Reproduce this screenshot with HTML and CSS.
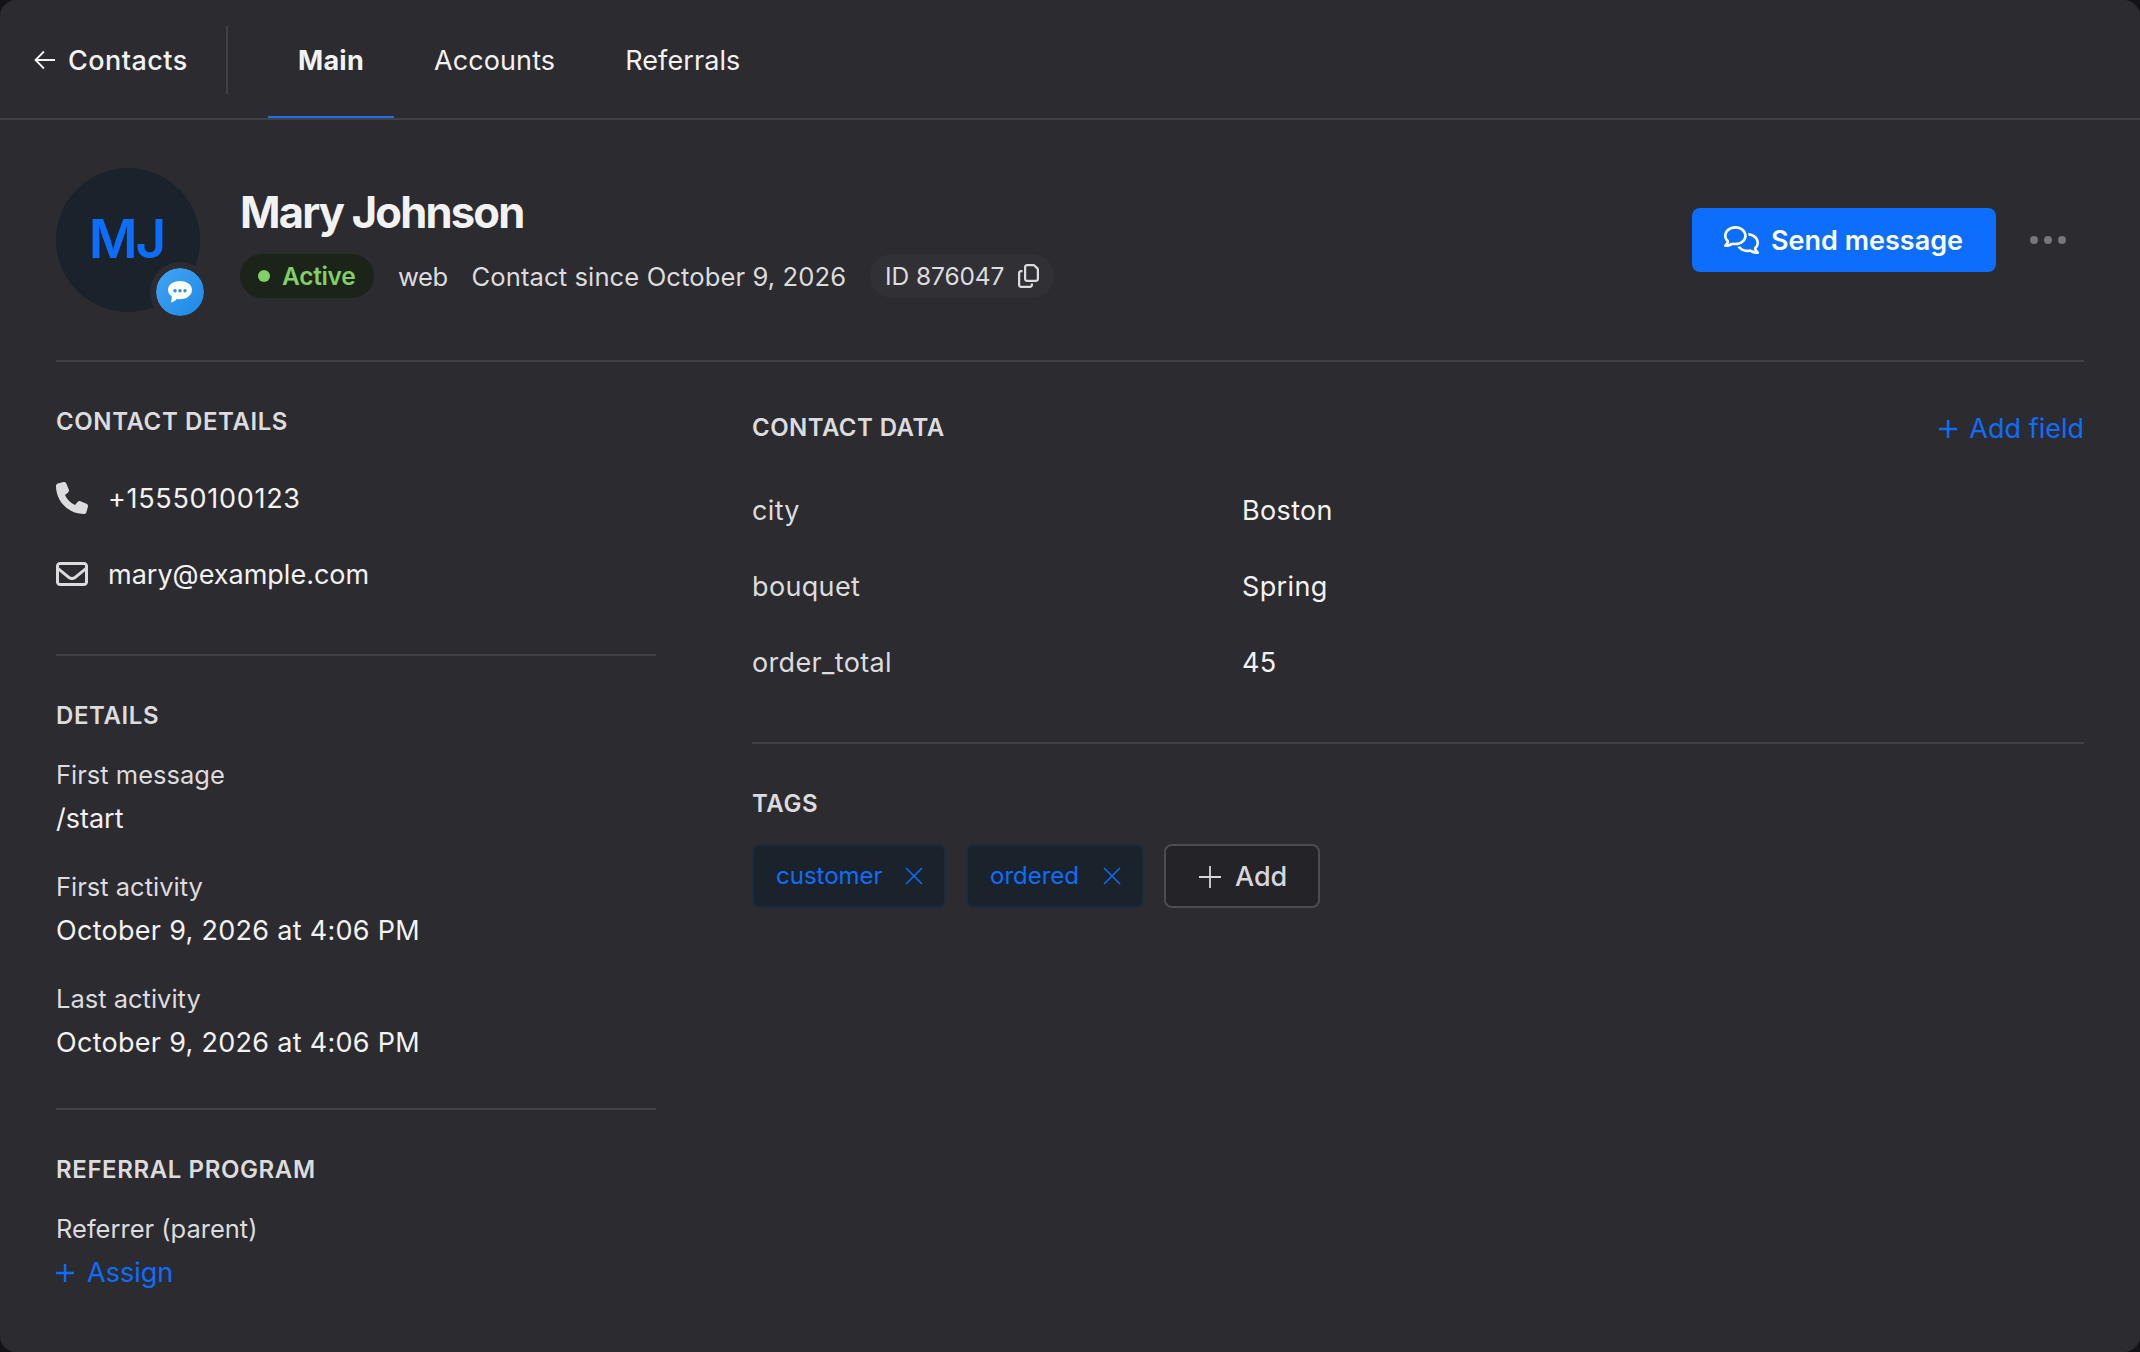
FILE: index.html
```html
<!DOCTYPE html>
<html lang="en">
<head>
  <meta charset="UTF-8">
  <title>Mary Johnson</title>
  <link rel="stylesheet" href="styles.css">
</head>
<body>
  <div class="window">
    <header class="topbar">
      <a class="back">
        <svg class="back-icon" viewBox="0 0 22 20"><path d="M21 10H1.5M10 1.5L1.5 10L10 18.5"/></svg>
        <span>Contacts</span>
      </a>
      <nav class="tabs">
        <a class="tab active">Main</a>
        <a class="tab">Accounts</a>
        <a class="tab">Referrals</a>
      </nav>
    </header>

    <main class="page">
      <section class="profile">
        <div class="avatar">
          <span>MJ</span>
          <div class="channel">
            <svg viewBox="0 0 24 22"><path fill="#fff" d="M12 0C5.2 0 0 3.8 0 8.8c0 2.6 1.4 4.9 3.7 6.5c.1 2-.3 4.3-.9 6.2c2.700-.5 4.600-1.700 5.900-3.500c1.100.2 2.200.3 3.300.3c6.800 0 12-4.200 12-9.500S18.800 0 12 0z"/><g fill="#2f8fe8"><circle cx="7" cy="9.8" r="1.7"/><circle cx="12" cy="9.8" r="1.7"/><circle cx="17" cy="9.8" r="1.7"/></g></svg>
          </div>
        </div>
        <div class="info">
          <h1>Mary Johnson</h1>
          <div class="meta">
            <span class="status">Active</span>
            <span class="source">web</span>
            <span class="since">Contact since October 9, 2026</span>
            <span class="contact-id">
              <span>ID 876047</span>
              <svg viewBox="0 0 448 512"><path d="M384 336H192c-8.8 0-16-7.2-16-16V64c0-8.8 7.2-16 16-16l140.1 0L400 115.9V320c0 8.8-7.2 16-16 16zM192 384H384c35.3 0 64-28.7 64-64V115.9c0-12.7-5.1-24.9-14.1-33.9L366.1 14.1c-9-9-21.2-14.1-33.9-14.1H192c-35.3 0-64 28.7-64 64V320c0 35.3 28.7 64 64 64zM64 128c-35.3 0-64 28.7-64 64V448c0 35.3 28.7 64 64 64H256c35.3 0 64-28.7 64-64V416H272v32c0 8.8-7.2 16-16 16H64c-8.8 0-16-7.2-16-16V192c0-8.8 7.2-16 16-16H96V128H64z"/></svg>
            </span>
          </div>
        </div>
        <button class="send">
          <svg viewBox="0 0 640 512"><path d="M88.2 309.1c9.8-18.3 6.8-40.8-7.5-55.8C59.4 230.9 48 204 48 176c0-63.5 63.8-128 160-128s160 64.5 160 128s-63.8 128-160 128c-13.1 0-25.8-1.3-37.8-3.6c-10.4-2-21.2-.6-30.7 4.2c-4.1 2.1-8.3 4.1-12.6 6c-16 7.2-32.9 13.5-49.9 18c2.8-4.6 5.4-9.1 7.9-13.6c1.1-1.9 2.2-3.9 3.2-5.9zM208 352c114.9 0 208-78.8 208-176S322.9 0 208 0S0 78.8 0 176c0 41.8 17.2 80.1 45.9 110.3c-.9 1.7-1.9 3.5-2.8 5.1c-10.3 18.4-22.3 36.5-36.6 52.1c-6.6 7-8.3 17.2-4.6 25.9C5.8 378.3 14.4 384 24 384c43 0 86.5-13.3 122.7-29.7c4.8-2.2 9.6-4.5 14.2-6.8c15.1 3 30.9 4.5 47.1 4.5zM432 480c16.2 0 31.9-1.6 47.1-4.5c4.6 2.3 9.4 4.6 14.2 6.8C529.5 498.7 573 512 616 512c9.6 0 18.2-5.7 22-14.5c3.8-8.8 2-19-4.6-25.9c-14.2-15.6-26.2-33.7-36.6-52.1c-.9-1.7-1.9-3.4-2.8-5.1C622.8 384.1 640 345.8 640 304c0-94.4-87.9-171.5-198.2-175.8c4.1 15.2 6.2 31.2 6.2 47.8l0 .6c87.2 6.7 144 67.5 144 127.4c0 28-11.4 54.9-32.7 77.2c-14.3 15-17.3 37.6-7.5 55.8c1.1 2 2.2 4 3.2 5.9c2.5 4.5 5.2 9 7.9 13.6c-17-4.5-33.9-10.7-49.9-18c-4.3-1.9-8.5-3.9-12.6-6c-9.5-4.8-20.3-6.2-30.7-4.2c-12.1 2.4-24.8 3.6-37.8 3.6c-61.7 0-110-26.5-136.8-62.3c-16 5.4-32.8 9.4-50 11.8C279 439.8 350 480 432 480z"/></svg>
          <span>Send message</span>
        </button>
        <button class="more"><i></i><i></i><i></i></button>
      </section>

      <div class="columns">
        <aside>
          <section class="block reach">
            <h2>Contact details</h2>
            <div class="reach-row">
              <svg viewBox="0 0 512 512"><path d="M164.9 24.6c-7.7-18.6-28-28.5-47.4-23.2l-88 24C12.1 30.2 0 46 0 64C0 311.4 200.6 512 448 512c18 0 33.8-12.1 38.6-29.5l24-88c5.3-19.4-4.6-39.7-23.2-47.4l-96-40c-16.3-6.8-35.2-2.1-46.3 11.6L304.7 368C234.3 334.7 177.3 277.7 144 207.3L193.3 167c13.7-11.2 18.4-30 11.6-46.3l-40-96z"/></svg>
              <span class="phone">+15550100123</span>
            </div>
            <div class="reach-row">
              <svg viewBox="0 0 512 512"><path d="M64 112c-8.8 0-16 7.2-16 16v22.1L220.5 291.7c20.7 17 50.4 17 71.1 0L464 150.1V128c0-8.8-7.2-16-16-16H64zM48 212.2V384c0 8.8 7.2 16 16 16H448c8.8 0 16-7.2 16-16V212.2L322 328.8c-38.4 31.5-93.7 31.5-132 0L48 212.2zM0 128C0 92.7 28.7 64 64 64H448c35.3 0 64 28.7 64 64V384c0 35.3-28.7 64-64 64H64c-35.3 0-64-28.7-64-64V128z"/></svg>
              <span>mary@example.com</span>
            </div>
          </section>
          <section class="block details">
            <h2>Details</h2>
            <dl>
              <dt>First message</dt>
              <dd>/start</dd>
              <dt>First activity</dt>
              <dd class="date">October 9, 2026 at 4:06 PM</dd>
              <dt>Last activity</dt>
              <dd class="date">October 9, 2026 at 4:06 PM</dd>
            </dl>
          </section>
          <section class="block">
            <h2>Referral program</h2>
            <dl>
              <dt>Referrer (parent)</dt>
              <dd><a class="link assign"><svg viewBox="0 0 18 18"><path d="M9 0V18M0 9H18"/></svg><span>Assign</span></a></dd>
            </dl>
          </section>
        </aside>

        <div class="content">
          <section class="block data">
            <div class="data-head">
              <h2>Contact data</h2>
              <a class="link"><svg viewBox="0 0 18 18"><path d="M9 0V18M0 9H18"/></svg><span>Add field</span></a>
            </div>
            <div class="fields">
              <span class="key">city</span><span>Boston</span>
              <span class="key">bouquet</span><span>Spring</span>
              <span class="key">order_total</span><span>45</span>
            </div>
          </section>
          <section class="block tags">
            <h2>Tags</h2>
            <div class="tag-list">
              <span class="tag"><span>customer</span><svg viewBox="0 0 18 18"><path d="M1 1L17 17M17 1L1 17"/></svg></span>
              <span class="tag"><span>ordered</span><svg viewBox="0 0 18 18"><path d="M1 1L17 17M17 1L1 17"/></svg></span>
              <button class="add"><svg viewBox="0 0 22 22"><path d="M11 0V22M0 11H22"/></svg><span>Add</span></button>
            </div>
          </section>
        </div>
      </div>
    </main>
  </div>
</body>
</html>
```
FILE: styles.css
```css
* {
  box-sizing: border-box;
}
body {
  margin: 0;
  background: #141418;
  color: #f2f2f3;
  font-family: Inter, "Liberation Sans", sans-serif;
  font-size: 27px;
  line-height: 44px;
}
h1, h2, dl, dd {
  margin: 0;
}
button {
  font: inherit;
  color: inherit;
  cursor: pointer;
}
svg {
  display: block;
  flex: none;
}
.window {
  height: 1352px;
  background: #2c2b30;
  border-radius: 16px;
  overflow: hidden;
}

/* top bar */
.topbar {
  display: flex;
  align-items: center;
  height: 120px;
  border-bottom: 2px solid #424146;
}
.back {
  display: flex;
  align-items: center;
  gap: 12px;
  width: 228px;
  height: 68px;
  margin-top: 2px;
  padding-left: 34px;
  border-right: 2px solid #424146;
  font-weight: 500;
  letter-spacing: 0.45px;
}
.back span {
  padding-top: 2px;
}
.back-icon {
  width: 22px;
  height: 20px;
  fill: none;
  stroke: #f2f2f3;
  stroke-width: 1.8;
}
.tabs {
  display: flex;
  align-self: stretch;
  margin-left: 40px;
}
.tab {
  padding: 39px 30px 33px;
  margin-right: 10px;
  letter-spacing: 0.1px;
}
.tab.active {
  font-weight: 700;
  letter-spacing: 0.25px;
  border-bottom: 2px solid #1f6fe8;
}

/* profile */
.page {
  padding: 0 56px;
}
.profile {
  display: flex;
  align-items: center;
  height: 242px;
  border-bottom: 2px solid #424146;
}
.avatar {
  position: relative;
  width: 144px;
  height: 144px;
  padding-right: 3px;
  border-radius: 50%;
  background: #1a222c;
  color: #0d6efd;
  font-size: 53px;
  font-weight: 600;
  line-height: 142px;
  letter-spacing: -2px;
  text-align: center;
}
.channel {
  position: absolute;
  right: -10px;
  bottom: -10px;
  display: flex;
  align-items: center;
  justify-content: center;
  width: 60px;
  height: 60px;
  border: 6px solid #2c2b30;
  border-radius: 50%;
  background: linear-gradient(135deg, #42a5f5, #1e88e5) padding-box;
}
.channel svg {
  width: 24px;
  height: 22px;
}
.info {
  margin-left: 40px;
}
h1 {
  margin-bottom: 12px;
  font-size: 43.5px;
  font-weight: 700;
  line-height: 60px;
  letter-spacing: -1.8px;
}
.meta {
  display: flex;
  align-items: center;
  gap: 24px;
  height: 44px;
  color: #dcdcde;
  font-size: 25.6px;
}
.source,
.since {
  padding-top: 2px;
}
.source {
  letter-spacing: -0.5px;
}
.since {
  letter-spacing: 0.09px;
}
.status {
  display: flex;
  align-items: center;
  gap: 12px;
  width: 134px;
  height: 44px;
  padding-left: 18px;
  border-radius: 22px;
  background: #1c2419;
  color: #82d065;
  font-size: 24.5px;
  font-weight: 600;
  letter-spacing: -0.3px;
}
.status::before {
  content: "";
  width: 12px;
  height: 12px;
  border-radius: 50%;
  background: currentColor;
}
.contact-id {
  display: flex;
  align-items: center;
  justify-content: space-between;
  width: 184px;
  height: 44px;
  padding: 0 15px;
  border-radius: 22px;
  background: #313035;
  font-size: 24.5px;
  letter-spacing: -0.1px;
}
.contact-id svg {
  width: 21px;
  height: 24px;
  fill: currentColor;
}
.send {
  display: flex;
  align-items: center;
  gap: 12px;
  width: 304px;
  height: 64px;
  margin-left: auto;
  padding: 2px 32px 0;
  border: none;
  border-radius: 8px;
  background: #0d6efd;
  color: #fff;
  font-weight: 600;
}
.send svg {
  width: 35px;
  height: 28px;
  margin-bottom: 2px;
  fill: currentColor;
}
.more {
  display: flex;
  gap: 6px;
  margin: 0 18px 0 34px;
  padding: 0;
  border: none;
  background: none;
}
.more i {
  width: 8px;
  height: 8px;
  border-radius: 50%;
  background: #77767a;
}

/* columns */
.columns {
  display: grid;
  grid-template-columns: 600px 1fr;
  gap: 96px;
}
.block {
  padding-top: 41px;
}
.block + .block {
  border-top: 2px solid #424146;
}
h2 {
  margin-bottom: 19px;
  color: #dcdcde;
  font-size: 24px;
  font-weight: 600;
  line-height: 38px;
  letter-spacing: 0.6px;
  text-transform: uppercase;
}
.reach {
  padding-bottom: 57px;
}
.reach h2 {
  margin-bottom: 36px;
}
.reach-row {
  display: flex;
  align-items: center;
  gap: 20px;
}
.reach-row + .reach-row {
  margin-top: 32px;
}
.reach-row svg {
  width: 32px;
  height: 32px;
  margin-bottom: 2px;
  fill: #dcdcde;
}
.phone {
  letter-spacing: 0.7px;
}
.details {
  padding-bottom: 43px;
}
dt {
  margin-bottom: 1px;
  color: #dcdcde;
  font-size: 25.5px;
  line-height: 42px;
}
dd + dt {
  margin-top: 25px;
}
.date {
  letter-spacing: 0.29px;
}
.link {
  display: flex;
  align-items: center;
  gap: 12px;
  color: #0d6efd;
}
.link svg {
  width: 18px;
  height: 18px;
  fill: none;
  stroke: currentColor;
  stroke-width: 2.4;
}
.assign {
  gap: 13px;
}
.data {
  padding: 40px 0 57px;
}
.data-head {
  display: flex;
  align-items: center;
  justify-content: space-between;
  height: 52px;
  margin-bottom: 35px;
}
.data-head h2 {
  margin: 0;
  letter-spacing: 0.45px;
}
.data-head .link {
  padding-top: 2px;
}
.fields {
  display: grid;
  grid-template-columns: 490px 1fr;
  row-gap: 32px;
  letter-spacing: 0.35px;
}
.key {
  color: #dcdcde;
}
.tags h2 {
  margin-bottom: 21px;
}
.tag-list {
  display: flex;
}
.tag {
  display: flex;
  align-items: center;
  justify-content: space-between;
  width: 194px;
  height: 64px;
  margin-right: 20px;
  padding: 0 21px 0 22px;
  border: 2px solid #1a2c3d;
  border-radius: 8px;
  background: #1a222c;
  color: #0d6efd;
  font-size: 24px;
}
.tag + .tag {
  width: 178px;
}
.tag svg {
  width: 18px;
  height: 18px;
  fill: none;
  stroke: currentColor;
  stroke-width: 1.5;
}
.add {
  display: flex;
  align-items: center;
  gap: 14px;
  width: 156px;
  height: 64px;
  padding: 1px 33px 0;
  border: 2px solid #4d4c50;
  border-radius: 8px;
  background: #242328;
  color: #d6d6dc;
  font-weight: 500;
}
.add svg {
  width: 22px;
  height: 22px;
  fill: none;
  stroke: currentColor;
  stroke-width: 1.8;
}
```
